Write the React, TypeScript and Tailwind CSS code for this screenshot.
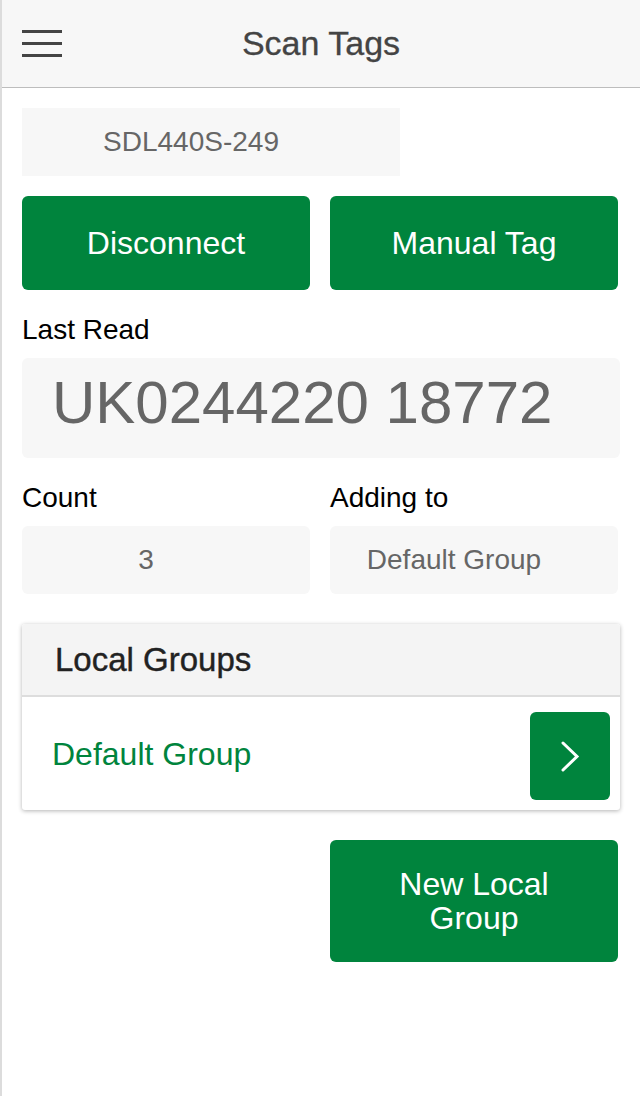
const font = {fontFamily: '"Liberation Sans", Arial, sans-serif'};

const GreenButton: React.FC<{children: React.ReactNode; className?: string}> = ({children, className}) => (
    <button
        className={`flex items-center justify-center rounded-md bg-[#00843d] text-center text-[32px] leading-[34px] text-white ${className ?? ''}`}
    >
        {children}
    </button>
);

// read-only value boxes centre their text with extra room on the right
const ValueBox: React.FC<{children: React.ReactNode; className?: string}> = ({children, className}) => (
    <div
        className={`flex h-[68px] items-center justify-center bg-[#f7f7f7] pr-[40px] text-[28px] text-[#666] ${className ?? ''}`}
    >
        {children}
    </div>
);

const App: React.FC = () => {
    return (
        <div className="min-h-[1096px] border-l-2 border-[#dcdcdc] bg-white" style={font}>
            {/* header */}
            <header className="relative flex h-[88px] items-center justify-center border-b border-[#bdbdbd] bg-[#f7f7f7]">
                <div className="absolute top-[30px] left-[20px] flex w-[40px] flex-col gap-[9px]">
                    <span className="h-[3px] bg-[#444]" />
                    <span className="h-[3px] bg-[#444]" />
                    <span className="h-[3px] bg-[#444]" />
                </div>
                <h1 className="text-[34px] text-[#444] [-webkit-text-stroke:0.3px_#444]">Scan Tags</h1>
            </header>

            <main className="flex flex-col px-[20px] pt-[20px]">
                <ValueBox className="w-[378px]">SDL440S-249</ValueBox>

                <div className="mt-[20px] grid grid-cols-2 gap-[20px] pr-[2px]">
                    <GreenButton className="h-[94px]">Disconnect</GreenButton>
                    <GreenButton className="h-[94px]">Manual Tag</GreenButton>
                </div>

                <div className="mt-[24px] text-[28px] leading-[32px] text-black">Last Read</div>
                <div className="mt-[12px] flex h-[100px] items-center rounded-md bg-[#f7f7f7] pb-[10px] pl-[30px] text-[60px] text-[#666]">
                    UK0244220 18772
                </div>

                <div className="mt-[24px] grid grid-cols-2 gap-[20px] pr-[2px]">
                    <div className="flex flex-col">
                        <div className="text-[28px] leading-[32px] text-black">Count</div>
                        <ValueBox className="mt-[12px] rounded-md">3</ValueBox>
                    </div>
                    <div className="flex flex-col">
                        <div className="text-[28px] leading-[32px] text-black">Adding to</div>
                        <ValueBox className="mt-[12px] rounded-md">Default Group</ValueBox>
                    </div>
                </div>

                <section className="mt-[30px] overflow-hidden rounded-[3px] bg-white shadow-[0_1px_4px_rgba(0,0,0,0.3)]">
                    <div className="flex h-[73px] items-center border-b-2 border-[#dddddd] bg-[#f4f4f4] pl-[33px] text-[33px] text-[#222] [-webkit-text-stroke:0.4px_#222]">
                        Local Groups
                    </div>
                    <div className="flex h-[113px] items-center justify-between pr-[10px] pl-[30px]">
                        <span className="text-[32px] text-[#00843d]">Default Group</span>
                        <button className="mt-[5px] flex h-[88px] w-[80px] items-center justify-center rounded-md bg-[#00843d] text-white">
                            <svg width="20" height="31" viewBox="0 0 20 31" fill="none">
                                <polyline
                                    points="3,2 17,15.5 3,29"
                                    stroke="currentColor"
                                    strokeWidth="3"
                                    strokeLinecap="round"
                                    strokeLinejoin="miter"
                                />
                            </svg>
                        </button>
                    </div>
                </section>

                <div className="mt-[30px] grid grid-cols-2 gap-[20px] pr-[2px]">
                    <div />
                    <GreenButton className="h-[122px]">
                        New Local
                        <br />
                        Group
                    </GreenButton>
                </div>
            </main>
        </div>
    );
};

export default App;
